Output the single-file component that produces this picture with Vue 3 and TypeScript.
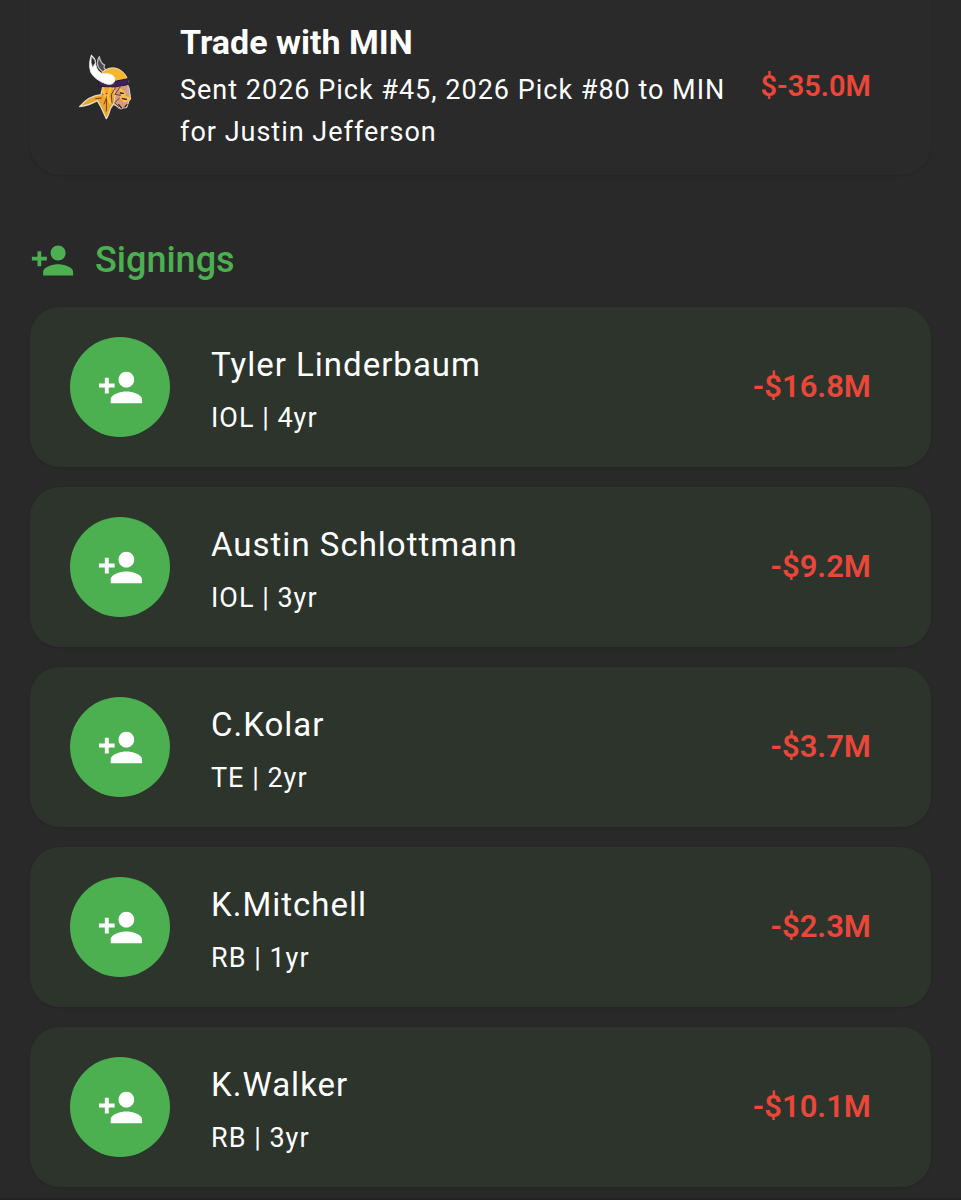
<script setup lang="ts">
interface Signing {
  name: string
  position: string
  years: number
  cap: string
}

const signings: Signing[] = [
  { name: 'Tyler Linderbaum', position: 'IOL', years: 4, cap: '-$16.8M' },
  { name: 'Austin Schlottmann', position: 'IOL', years: 3, cap: '-$9.2M' },
  { name: 'C.Kolar', position: 'TE', years: 2, cap: '-$3.7M' },
  { name: 'K.Mitchell', position: 'RB', years: 1, cap: '-$2.3M' },
  { name: 'K.Walker', position: 'RB', years: 3, cap: '-$10.1M' },
]

const personAdd =
  'M15 12c2.21 0 4-1.79 4-4s-1.79-4-4-4-4 1.79-4 4 1.79 4 4 4zm-9-2V7H4v3H1v2h3v3h2v-3h3v-2H6zm9 4c-2.67 0-8 1.34-8 4v2h16v-2c0-2.66-5.33-4-8-4z'
</script>

<template>
  <main class="page">
    <article class="trade">
      <svg class="logo" viewBox="0 0 210 240" aria-hidden="true">
        <g stroke-linejoin="round" stroke-linecap="round">
          <path d="M100 78Q83 68 82 52Q83 38 88 32Q91 52 104 57Q98 66 111 74Z" fill="#4a4a4a" stroke="#bbb" stroke-width="4" />
          <path d="M93 146Q55 150 29 182Q58 178 82 164L94 185L109 218Q115 211 121 188L134 169L154 158L147 120L100 116Z" fill="#eea52c" stroke="#e5dac6" stroke-width="4" />
          <path d="M98 77Q119 60 143 68Q168 79 174 105L170 125L98 120Z" fill="#f8b52e" stroke="#eadfbd" stroke-width="3" />
          <path d="M131 120L170 112L177 125L181 151Q184 159 177 165L170 185L153 187L131 176L136 145Z" fill="#d99a7c" stroke="#ddd" stroke-width="3" />
          <path d="M88 101L135 106L174 98L173 116L133 123L86 121Z" fill="#42205f" stroke="#211b2a" stroke-width="3" />
          <path d="M64 28Q54 56 63 80Q75 101 107 113Q125 119 133 108Q138 95 128 88Q114 79 98 84Q80 76 77 55Q78 36 64 28Z" fill="#fff" stroke="#eee" stroke-width="3" />
          <path d="M66 34Q62 50 68 62L75 50Q74 40 66 34Z" fill="#222" stroke="#777" stroke-width="2" />
          <path d="M137 125L124 145L126 171M151 122L135 145L151 148M98 145L116 141L102 174M77 158L94 156M110 151L109 195M148 157L134 170L145 181" fill="none" stroke="#704029" stroke-width="3" />
          <path d="M151 131L164 143L156 149L180 158L164 166L153 155M121 127L113 153L121 171M99 128L105 150" fill="none" stroke="#ffc13f" stroke-width="7" />
          <path d="M151 141L160 142M157 158L169 160M146 176L158 190L171 176" fill="none" stroke="#292525" stroke-width="4" />
          <path d="M143 185Q154 194 164 184M174 119L170 137L181 151" fill="none" stroke="#b8b8b8" stroke-width="3" />
        </g>
      </svg>
      <div class="trade-text">
        <h2 class="trade-title">Trade with MIN</h2>
        <p class="trade-detail">Sent 2026 Pick #45, 2026 Pick #80 to MIN for Justin Jefferson</p>
      </div>
      <span class="amount amount-trade">$-35.0M</span>
    </article>

    <section>
      <h2 class="heading">
        <svg class="heading-icon" viewBox="0 0 24 24" aria-hidden="true"><path :d="personAdd" /></svg>
        Signings
      </h2>
      <ul class="list">
        <li v-for="s in signings" :key="s.name" class="card">
          <span class="avatar">
            <svg class="avatar-icon" viewBox="0 0 24 24" aria-hidden="true"><path :d="personAdd" /></svg>
          </span>
          <div class="player">
            <h3 class="name">{{ s.name }}</h3>
            <p class="terms">{{ s.position }} | {{ s.years }}yr</p>
          </div>
          <span class="amount">{{ s.cap }}</span>
        </li>
      </ul>
    </section>
  </main>
</template>

<style>
body {
  background: #2a2929;
}
</style>

<style scoped>
.page {
  padding: 0 30px 11px;
  border-bottom: 2px solid #222;
  font-family: Roboto, "Liberation Sans", sans-serif;
  color: #fff;
}

h2,
h3,
p,
ul {
  margin: 0;
  padding: 0;
}

.trade {
  display: flex;
  align-items: center;
  padding: 18px 60px 22px 40px;
  border-radius: 0 0 30px 30px;
  background: #2a2a2a;
  box-shadow: 0 1px 3px rgba(0, 0, 0, 0.12);
}

.logo {
  flex: none;
  width: 70px;
  height: 80px;
  margin-right: 40px;
}

.trade-text {
  flex: 1;
  min-width: 0;
}

.trade-title {
  margin-bottom: 3px;
  font-size: 34px;
  line-height: 48px;
  font-weight: 700;
}

.trade-detail {
  font-size: 27px;
  line-height: 42px;
  letter-spacing: 1px;
}

.amount {
  flex: none;
  margin-left: 20px;
  font-size: 31px;
  line-height: 40px;
  font-weight: 600;
  color: #ea4639;
}

.amount-trade {
  font-size: 29px;
}

.heading {
  display: flex;
  align-items: center;
  gap: 20px;
  padding: 59px 0 21px;
  font-size: 36px;
  line-height: 52px;
  font-weight: 500;
  color: #4caf50;
}

.heading-icon {
  width: 45px;
  height: 45px;
  fill: #4caf50;
}

.list {
  display: grid;
  gap: 20px;
  list-style: none;
}

.card {
  display: flex;
  align-items: center;
  gap: 41px;
  padding: 25px 60px 25px 40px;
  border-radius: 30px;
  background: #2c342c;
  box-shadow: 0 1px 3px rgba(0, 0, 0, 0.12);
}

.avatar {
  flex: none;
  display: grid;
  place-items: center;
  width: 100px;
  height: 100px;
  border-radius: 50%;
  background: #4caf50;
}

.avatar-icon {
  width: 47px;
  height: 47px;
  fill: #fff;
}

.player {
  flex: 1;
  min-width: 0;
  padding-top: 4px;
}

.name {
  font-size: 33px;
  line-height: 58px;
  font-weight: 400;
  letter-spacing: 1px;
}

.terms {
  font-size: 27px;
  line-height: 48px;
  letter-spacing: 1px;
}
</style>
